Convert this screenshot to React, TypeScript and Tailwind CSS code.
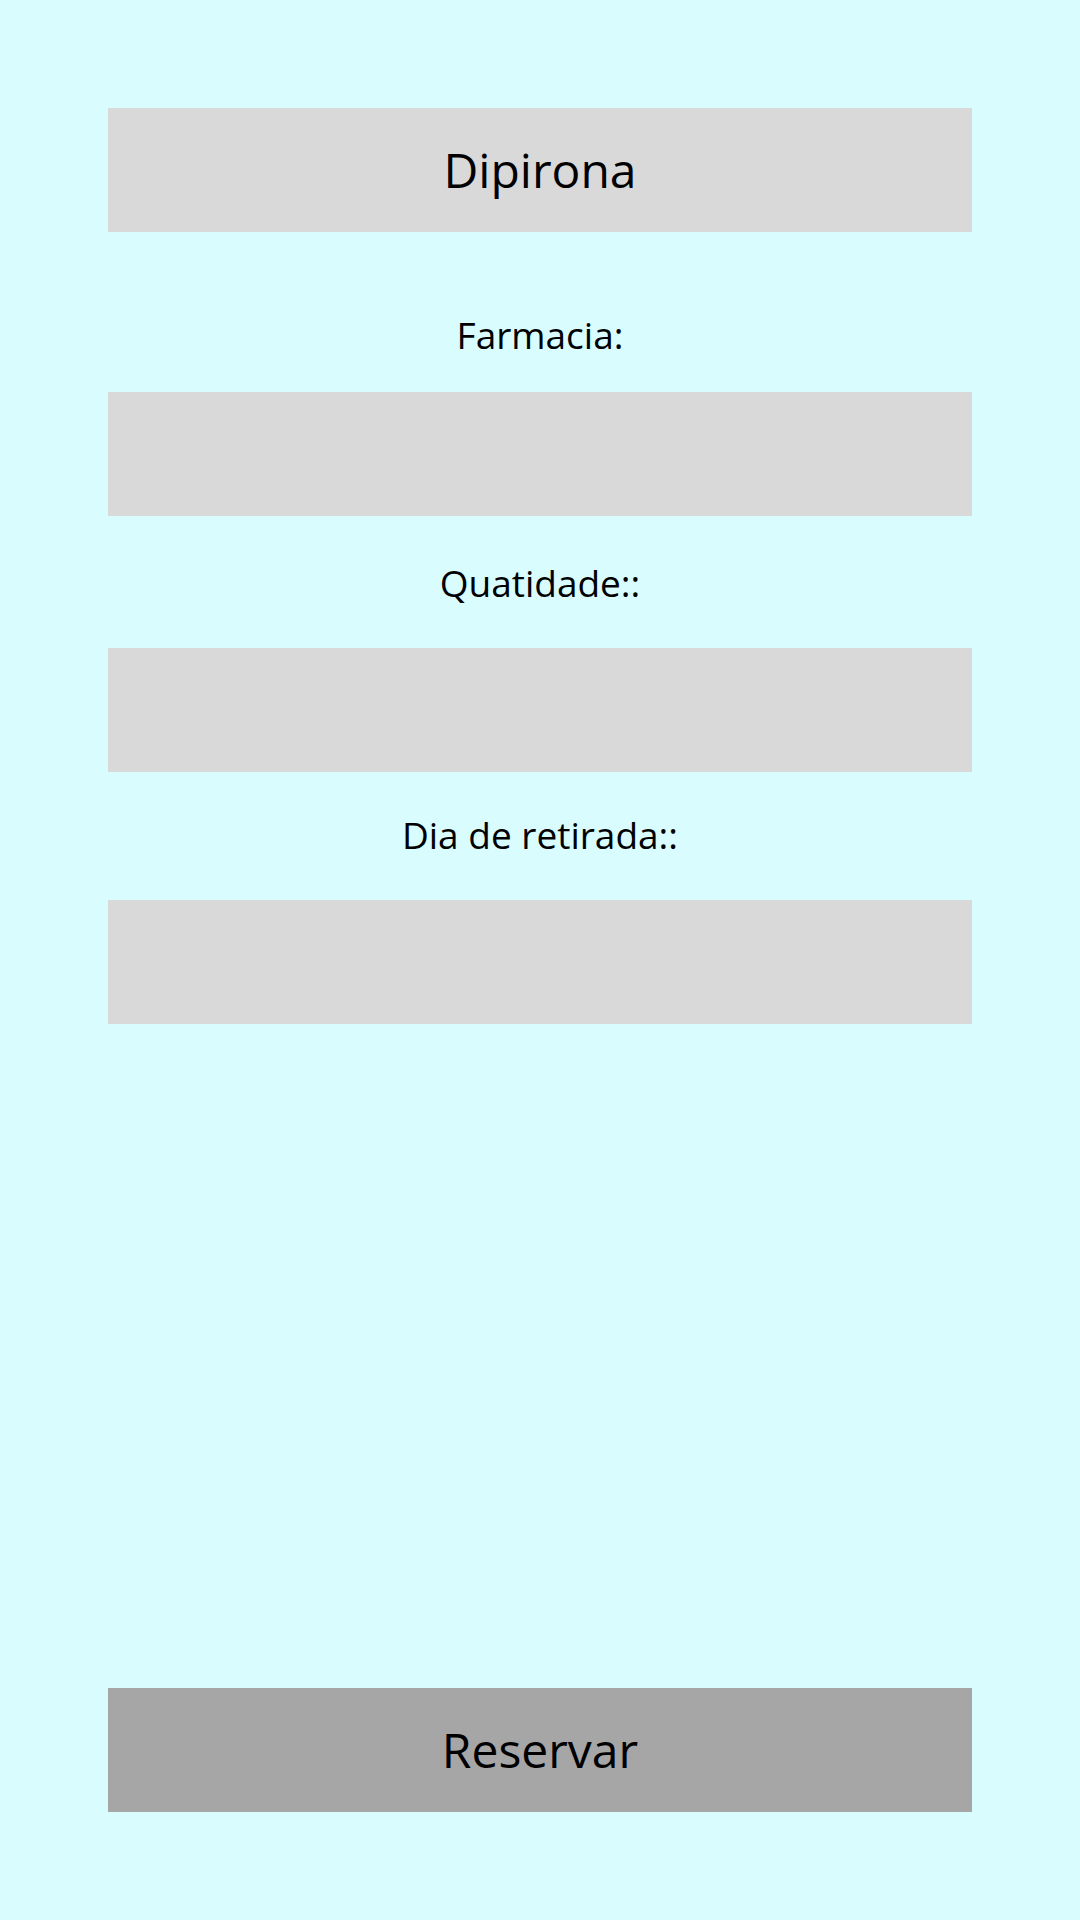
const fields = [
  { id: "farmacia", label: "Farmacia:", labelClass: "mt-[84px] mb-[39px]" },
  { id: "quantidade", label: "Quatidade::", labelClass: "mt-[48px] mb-[47px]" },
  { id: "dia", label: "Dia de retirada::", labelClass: "mt-[44px] mb-[47px]" },
];

export default function App() {
  return (
    <div
      className="flex h-[1920px] w-full flex-col bg-[#d9fcff] px-[108px] py-[108px] text-black"
      style={{ fontFamily: '"Open Sans", "Noto Sans", sans-serif' }}
    >
      <div className="flex h-[124px] items-center justify-center bg-[#d9d9d9]">
        <h1 className="text-[48px] leading-none">Dipirona</h1>
      </div>

      {fields.map((field) => (
        <div key={field.id} className="flex flex-col">
          <label
            htmlFor={field.id}
            className={`block text-center text-[37px] leading-none ${field.labelClass}`}
          >
            {field.label}
          </label>
          <input
            id={field.id}
            type="text"
            className="h-[124px] w-full bg-[#d9d9d9] outline-none"
          />
        </div>
      ))}

      <button
        type="button"
        className="mt-auto flex h-[124px] w-full items-center justify-center bg-[#a6a6a6] text-[48px] leading-none"
      >
        Reservar
      </button>
    </div>
  );
}
